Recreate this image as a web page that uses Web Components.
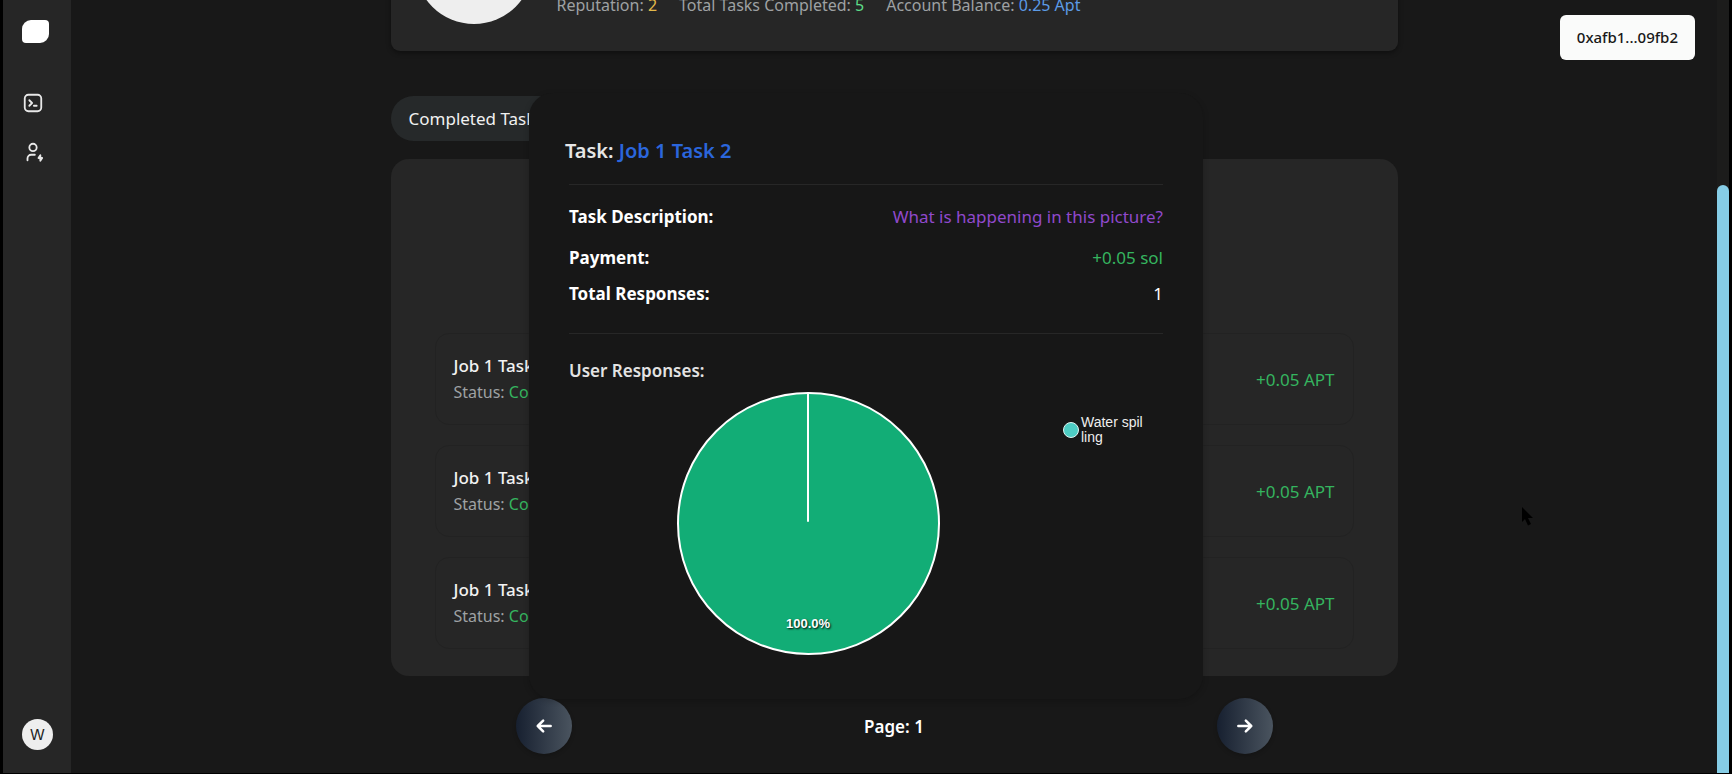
<!DOCTYPE html>
<html lang="en">
<head>
<meta charset="utf-8">
<meta name="viewport" content="width=device-width, initial-scale=1">
<title>Worker profile</title>
<style>
  html, body { height: 100%; }
  body {
    margin: 0;
    background: #000;
    color: #fff;
    font: 17px/27px "Noto Sans", "Open Sans", sans-serif;
    overflow: hidden;
    --page: #181818;
    --surface: #262626;
    --surface-edge: #222;
    --muted: #9ea1a3;
    --green: #35b45f;
  }
</style>
</head>
<body>
<app-shell>
  <side-bar slot="side" initial="W"></side-bar>

  <profile-card>
    <stat-item label="Reputation:" style="--tone:#e3b94a">2</stat-item>
    <stat-item label="Total Tasks Completed:" style="--tone:#5ddc86">5</stat-item>
    <stat-item label="Account Balance:" style="--tone:#5c9be6">0.25 Apt</stat-item>
  </profile-card>
  <tab-pill>Completed Tasks</tab-pill>
  <task-list>
    <task-row amount="+0.05 APT" status="Completed">Job 1 Task 1</task-row>
    <task-row amount="+0.05 APT" status="Completed">Job 1 Task 2</task-row>
    <task-row amount="+0.05 APT" status="Completed">Job 1 Task 3</task-row>
  </task-list>
  <page-nav page="1"></page-nav>

  <wallet-button slot="over">0xafb1...09fb2</wallet-button>
  <task-dialog slot="over" name="Job 1 Task 2">
    <detail-row slot="details" label="Task Description:" class="wide" style="--tone:#9049cc">What is happening in this picture?</detail-row>
    <detail-row slot="details" label="Payment:" style="--tone:#35b45f">+0.05 sol</detail-row>
    <detail-row slot="details" label="Total Responses:">1</detail-row>
    <response-chart share="100.0%">Water spil<br>ling</response-chart>
  </task-dialog>
  <mouse-pointer slot="over"></mouse-pointer>
</app-shell>

<script>
const define = (name, html) => {
  const template = document.createElement('template');
  template.innerHTML = html;
  customElements.define(name, class extends HTMLElement {
    constructor() {
      super();
      this.attachShadow({ mode: 'open' }).append(template.content.cloneNode(true));
    }
    connectedCallback() {
      for (const node of this.shadowRoot.querySelectorAll('[data-attr]'))
        node.textContent = this.getAttribute(node.dataset.attr);
    }
  });
};

define('app-shell', `
  <style>
    :host {
      display: grid; grid-template-columns: 68px minmax(0, 1fr) 12px;
      box-sizing: border-box; height: 100vh; position: relative;
      border: solid #000; border-width: 0 3px 1px; background: var(--page);
    }
    main { overflow: hidden; }
    .column { max-width: 1007px; margin: -121px auto 0; }
    .rail { background: #1c1c1b; padding-top: 185px; display: flex; overflow: hidden; }
    .thumb { flex: 1; background: #86cde6; border-radius: 6px 6px 0 0; }
  </style>
  <slot name="side"></slot>
  <main><div class="column"><slot></slot></div></main>
  <div class="rail"><div class="thumb"></div></div>
  <slot name="over"></slot>
`);

define('side-bar', `
  <style>
    :host {
      display: flex; flex-direction: column; align-items: flex-start;
      box-sizing: border-box; padding: 20px 19px 23px; background: var(--surface);
    }
    a { display: block; color: #e8e8e8; text-decoration: none; }
    .logo { width: 27px; height: 23px; background: #fff; border-radius: 9px 4px 9px 4px; }
    nav { display: flex; flex-direction: column; gap: 27px; margin-top: 49px; }
    svg { display: block; width: 22px; height: 22px; fill: none; stroke: currentColor;
      stroke-width: 2; stroke-linecap: round; stroke-linejoin: round; }
    .me {
      margin-top: auto; width: 31px; height: 31px; border-radius: 50%;
      background: #eee; color: #222; text-align: center;
      font: 15px/31px Inter, Roboto, sans-serif;
    }
  </style>
  <a class="logo" href="#" aria-label="Home"></a>
  <nav>
    <a href="#tasks" aria-label="Tasks"><svg viewBox="0 0 24 24">
      <path d="M8 9l3 3l-3 3M13 15h3"/><rect x="3" y="3" width="18" height="18" rx="4"/></svg></a>
    <a href="#profile" aria-label="Profile"><svg viewBox="0 0 24 24">
      <circle cx="12" cy="7" r="4"/><path d="M6 21v-2a4 4 0 0 1 4-4h4"/>
      <path d="M20 15.500l-2 3h4l-2 3z" fill="currentColor"/></svg></a>
  </nav>
  <a class="me" href="#account" data-attr="initial"></a>
`);

define('profile-card', `
  <style>
    :host {
      display: flex; gap: 24px; padding: 27px 24px; background: var(--surface);
      border-radius: 9px; box-shadow: 0 2px 5px #0006;
    }
    .avatar { width: 118px; height: 118px; border-radius: 50%; background: #eee; }
    .stats { display: flex; gap: 22px; align-self: flex-end; padding-bottom: 7px; }
  </style>
  <div class="avatar"></div>
  <div class="stats"><slot></slot></div>
`);

define('stat-item', `
  <style>
    :host { display: block; font-size: 16px; line-height: 24px; color: var(--muted); white-space: nowrap; }
    b { font-weight: 400; color: var(--tone); }
  </style>
  <span data-attr="label"></span> <b><slot></slot></b>
`);

define('tab-pill', `
  <style>
    :host { display: flex; margin: 45px 0 18px; }
    button {
      border: 0; border-radius: 23px; padding: 9px 18px; background: #26292a;
      color: #f1f1f1; font: inherit;
    }
  </style>
  <button type="button"><slot></slot></button>
`);

define('task-list', `
  <style>
    :host {
      display: flex; flex-direction: column; gap: 20px;
      padding: 174px 44px 27px; background: var(--surface); border-radius: 18px;
    }
  </style>
  <slot></slot>
`);

define('task-row', `
  <style>
    :host {
      display: flex; justify-content: space-between; align-items: center;
      padding: 18px; border: 1px solid var(--surface-edge); border-radius: 14px;
    }
    h3 { margin: 0; font-size: 17px; font-weight: 500; color: #f2f2f2; }
    p { margin: 0; font-size: 16px; color: var(--muted); }
    b, output { font-weight: 400; color: var(--green); }
  </style>
  <div>
    <h3><slot></slot></h3>
    <p>Status: <b data-attr="status"></b></p>
  </div>
  <output data-attr="amount"></output>
`);

define('page-nav', `
  <style>
    :host {
      display: flex; justify-content: space-between; align-items: center;
      padding: 22px 125px; font-weight: 600;
    }
    button {
      display: grid; place-items: center; width: 56px; height: 56px; padding: 0; border: 0;
      border-radius: 50%; color: #fff; background: linear-gradient(to right, #172030, #4a545f);
      box-shadow: 0 2px 4px #0003;
    }
    svg { width: 20px; height: 20px; fill: none; stroke: currentColor; stroke-width: 3;
      stroke-linecap: round; stroke-linejoin: round; }
  </style>
  <button type="button" aria-label="Previous page"><svg viewBox="0 0 24 24"><path d="M20 12H4.500M11 5.500L4.500 12l6.500 6.500"/></svg></button>
  <span>Page: <span data-attr="page"></span></span>
  <button type="button" aria-label="Next page"><svg viewBox="0 0 24 24"><path d="M4 12h15.500M13 5.500l6.500 6.500l-6.500 6.500"/></svg></button>
`);

define('wallet-button', `
  <style>
    :host { position: absolute; top: 15px; right: 34px; }
    button {
      display: block; border: 0; border-radius: 6px; padding: 9px 17px; background: #fafbfa;
      color: #181818; font: 500 15px/27px "Noto Sans", sans-serif;
    }
  </style>
  <button type="button"><slot></slot></button>
`);

define('task-dialog', `
  <style>
    :host {
      position: absolute; inset: 0; display: grid; place-items: center;
      padding-top: 19px; pointer-events: none;
    }
    section {
      box-sizing: border-box; width: 674px; padding: 43px 36px 44px; border-radius: 24px;
      background: #171717; box-shadow: 0 2px 6px #0003; pointer-events: auto;
    }
    h2 { margin: 0 0 18px; font-size: 20px; line-height: 30px; font-weight: 600; color: #e6e6e6; }
    h2 span { color: #2b66dc; }
    h3 { margin: 0 0 8px; font-size: 17px; font-weight: 600; color: #e3e3e3; }
    .body { padding: 0 4px; }
    .details {
      display: flex; flex-direction: column; gap: 9px; margin-bottom: 23px;
      padding: 18px 0 26px; border: solid #272727; border-width: 1px 0;
    }
  </style>
  <section role="dialog" aria-labelledby="title">
    <h2 id="title">Task: <span data-attr="name"></span></h2>
    <div class="body">
      <div class="details"><slot name="details"></slot></div>
      <h3>User Responses:</h3>
      <slot></slot>
    </div>
  </section>
`);

define('detail-row', `
  <style>
    :host { display: flex; justify-content: space-between; }
    :host(.wide) { padding-bottom: 5px; }
    b { font-weight: 700; color: #fff; }
    span { color: var(--tone, #fff); }
  </style>
  <b data-attr="label"></b><span><slot></slot></span>
`);

define('response-chart', `
  <style>
    :host { display: flex; padding-left: 108px; font: 14px/15px "Liberation Sans", Arial, sans-serif; }
    svg { display: block; width: 263px; height: 263px; }
    text { font: 700 13px "Liberation Sans", Arial, sans-serif; fill: #fff; text-anchor: middle;
      text-shadow: 1px 1px 2px #000; }
    .legend { display: flex; align-self: flex-start; align-items: center; gap: 2px;
      margin: 23px 0 0 123px; color: #eee; }
    i { box-sizing: border-box; width: 16px; height: 16px; border: 1px solid #e0f5f3;
      border-radius: 50%; background: #4ecdc4; }
  </style>
  <svg viewBox="0 0 263 263">
    <circle cx="131.500" cy="131.500" r="130.500" fill="#12ad76" stroke="#fff" stroke-width="2"/>
    <path d="M131 1v128" stroke="#fff" stroke-width="2" stroke-linecap="round"/>
    <text x="131" y="236" data-attr="share"></text>
  </svg>
  <div class="legend"><i></i><span><slot></slot></span></div>
`);

define('mouse-pointer', `
  <style>
    :host { position: absolute; left: 88%; top: 507px; }
    svg { display: block; width: 12px; height: 19px; }
  </style>
  <svg viewBox="0 0 12 19"><path d="M0 0v15l3-3l3 6.500l3-1.500l-3-6h5z" fill="#000"/></svg>
`);
</script>
</body>
</html>
